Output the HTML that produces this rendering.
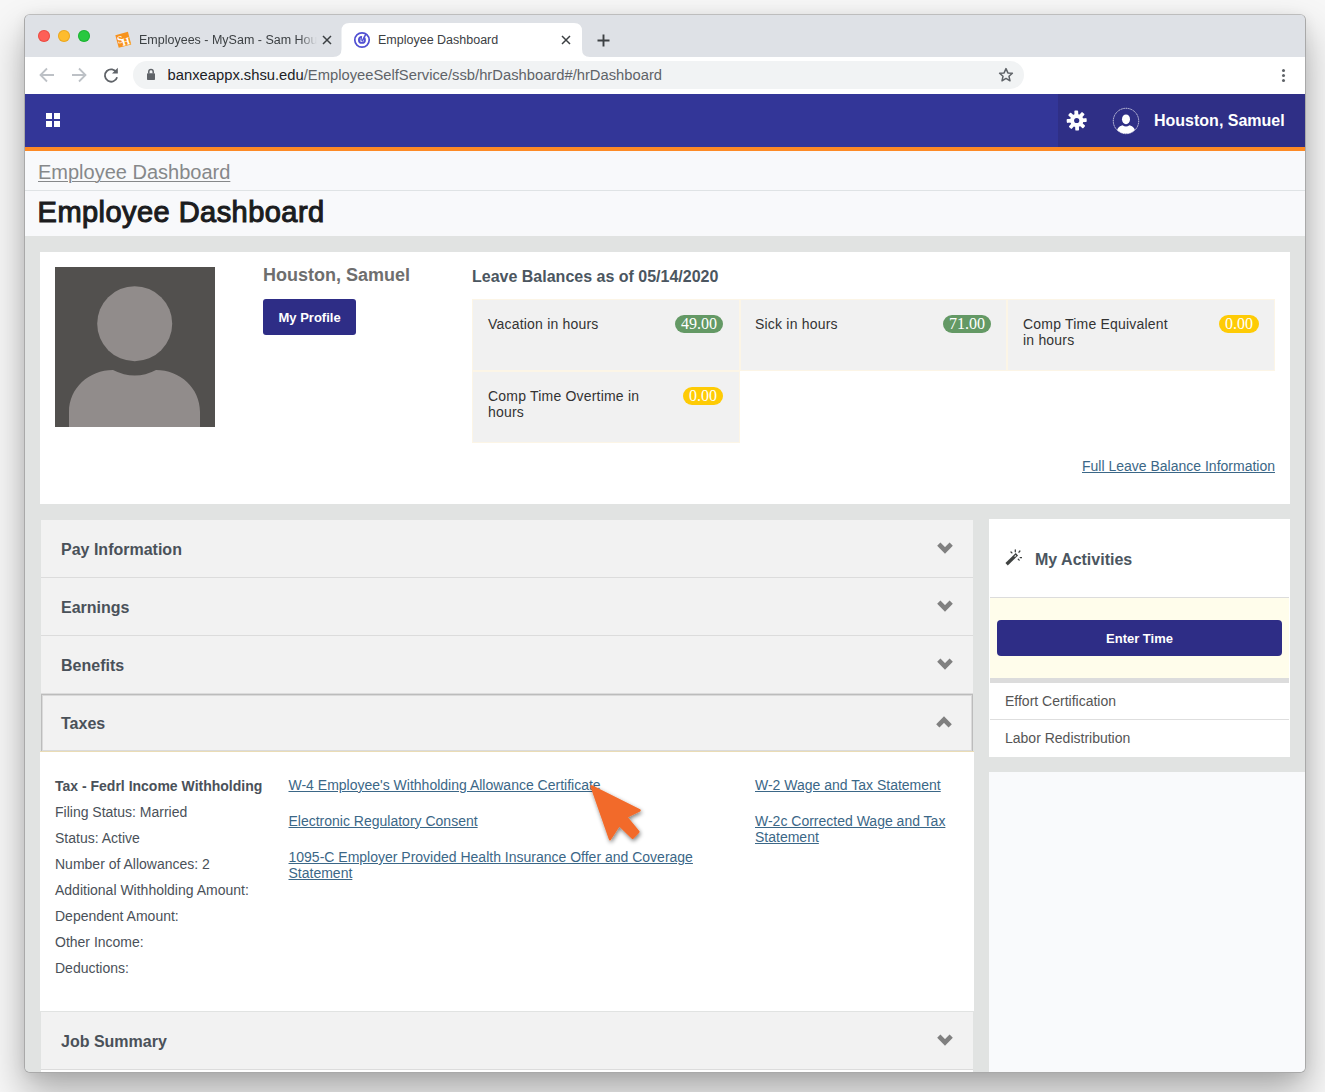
<!DOCTYPE html>
<html><head><meta charset="utf-8">
<style>
*{margin:0;padding:0;box-sizing:border-box}
html,body{width:1325px;height:1092px;overflow:hidden;background:#f7f7f7;font-family:"Liberation Sans",sans-serif}
.a{position:absolute}
.t{position:absolute;white-space:nowrap;line-height:16px}
#win{position:absolute;left:24px;top:14px;width:1282px;height:1059px;border:1px solid #a9a9a9;border-top-color:#bdbdbd;border-radius:6px;overflow:hidden;background:#dee1e6;box-shadow:0 20px 38px rgba(0,0,0,.30),0 2px 14px rgba(0,0,0,.07)}
#c{position:absolute;left:-25px;top:-15px;width:1325px;height:1092px}
.dot{position:absolute;width:12px;height:12px;border-radius:50%}
.hdr{position:absolute;left:41px;width:932px;height:58px;background:#f2f2f2;border-bottom:1px solid #dcdcdc}
.hdr .t{left:20px;font-weight:bold;font-size:16px;color:#4a5159}
.chev{position:absolute;left:896px;width:16px;height:12px}
.k{font-size:14px;color:#4a5159}
.lnk{font-size:14px;color:#3b6787;text-decoration:underline;text-underline-offset:1px}
.tile{position:absolute;height:72px;background:#f1f1f1;border:1px solid #fcf5e6}
.tl{position:absolute;font-size:14px;color:#333;letter-spacing:.2px;line-height:16px;white-space:nowrap}
.badge{position:absolute;height:18px;border-radius:9px;font-family:"Liberation Serif",serif;font-size:16px;line-height:18px;color:#fff;text-align:center}
</style></head>
<body>
<div id="win"><div id="c">
  <!-- ===== tab strip ===== -->
  <div class="a" style="left:0;top:0;width:1325px;height:57px;background:#dee1e6"></div>
  <div class="dot" style="left:38px;top:30px;background:#fe5f57;box-shadow:inset 0 0 0 1px rgba(200,40,30,.35)"></div>
  <div class="dot" style="left:58px;top:30px;background:#febc2e;box-shadow:inset 0 0 0 1px rgba(200,130,0,.35)"></div>
  <div class="dot" style="left:78px;top:30px;background:#28c840;box-shadow:inset 0 0 0 1px rgba(0,140,20,.35)"></div>


  <!-- inactive tab -->
  <svg class="a" style="left:113px;top:30px" width="20" height="20" viewBox="0 0 20 20">
    <g transform="rotate(-15 10.3 9.8)"><rect x="3.8" y="3.3" width="13" height="13" fill="#f7931d"/>
    <text x="4.4" y="12.2" font-family="Liberation Serif" font-size="10.5" font-weight="bold" fill="#fff">S</text>
    <text x="8.3" y="15.6" font-family="Liberation Serif" font-size="10.5" font-weight="bold" fill="#fff">H</text></g>
  </svg>
  <div class="t" style="left:139px;top:32px;font-size:12.5px;color:#3c4043;width:178px;overflow:hidden;-webkit-mask-image:linear-gradient(90deg,#000 160px,transparent 178px)">Employees - MySam - Sam Houston State</div>
  <svg class="a" style="left:321px;top:34px" width="12" height="12" viewBox="0 0 12 12"><path d="M2 2L10 10M10 2L2 10" stroke="#3c4043" stroke-width="1.5" fill="none"/></svg>
  <!-- active tab -->
  <svg class="a" style="left:333px;top:22px" width="258" height="36" viewBox="0 0 258 36">
    <path d="M0 35 Q8.5 35 8.5 27 V9 Q8.5 1 16.5 1 H241 Q249 1 249 9 V27 Q249 35 257 35 V36 H0Z" fill="#fff"/>
  </svg>
  <svg class="a" style="left:352px;top:30px" width="20" height="20" viewBox="0 0 20 20">
    <circle cx="10" cy="10" r="7.2" stroke="#5150d2" stroke-width="1.7" fill="none"/>
    <circle cx="9.95" cy="9.9" r="3.05" stroke="#5150d2" stroke-width="1.8" fill="none"/>
    <path d="M9.7 5.0L14 4.6L12.4 8.0L9.4 10.6Z" fill="#fff"/>
    <path d="M8.9 10.6L9.5 6.2" stroke="#5150d2" stroke-width="1.4" fill="none"/>
    <path d="M10.1 11.3L14.1 3.6" stroke="#5150d2" stroke-width="1.6" fill="none"/>
  </svg>
  <div class="t" style="left:378px;top:32px;font-size:12.5px;color:#3c4043">Employee Dashboard</div>
  <svg class="a" style="left:560px;top:34px" width="12" height="12" viewBox="0 0 12 12"><path d="M2 2L10 10M10 2L2 10" stroke="#3c4043" stroke-width="1.5" fill="none"/></svg>
  <svg class="a" style="left:596px;top:33px" width="15" height="15" viewBox="0 0 15 15"><path d="M7.5 1.5V13.5M1.5 7.5H13.5" stroke="#3c4043" stroke-width="1.9" fill="none"/></svg>
  <!-- ===== toolbar ===== -->
  <div class="a" style="left:0;top:57px;width:1325px;height:37px;background:#fff"></div>
  <div class="a" style="left:133px;top:61px;width:891px;height:28px;border-radius:14px;background:#f1f3f4"></div>

  <svg class="a" style="left:38px;top:66px" width="18" height="18" viewBox="0 0 18 18"><path d="M16 9H3M9 2.5L2.5 9L9 15.5" stroke="#bdc1c6" stroke-width="1.8" fill="none"/></svg>
  <svg class="a" style="left:70px;top:66px" width="18" height="18" viewBox="0 0 18 18"><path d="M2 9H15M9 2.5L15.5 9L9 15.5" stroke="#bdc1c6" stroke-width="1.8" fill="none"/></svg>
  <svg class="a" style="left:102px;top:66px" width="18" height="18" viewBox="0 0 18 18"><path d="M14.6 6.6A6.2 6.2 0 1 0 15.1 11.2" stroke="#5f6368" stroke-width="1.8" fill="none"/><path d="M10 7.6H15.8V1.8Z" fill="#5f6368"/></svg>
  <svg class="a" style="left:145px;top:67px" width="12" height="15" viewBox="0 0 12 15"><path d="M3.8 6.5V4.6A2.2 2.2 0 0 1 8.2 4.6V6.5" stroke="#5f6368" stroke-width="1.5" fill="none"/><rect x="2" y="6.2" width="8" height="6.8" rx=".8" fill="#5f6368"/></svg>
  <div class="t" style="left:167.6px;top:66px;font-size:14.75px;line-height:18px;color:#202124">banxeappx.shsu.edu<span style="color:#5f6368">/EmployeeSelfService/ssb/hrDashboard#/hrDashboard</span></div>
  <svg class="a" style="left:997px;top:66px" width="18" height="18" viewBox="0 0 18 18"><path d="M9 2.6L10.9 6.9L15.4 7.3L12 10.3L13 14.8L9 12.4L5 14.8L6 10.3L2.6 7.3L7.1 6.9Z" stroke="#5f6368" stroke-width="1.5" fill="none" stroke-linejoin="round"/></svg>
  <div class="a" style="left:1282px;top:68.9px;width:3px;height:3px;border-radius:50%;background:#5f6368"></div>
  <div class="a" style="left:1282px;top:74px;width:3px;height:3px;border-radius:50%;background:#5f6368"></div>
  <div class="a" style="left:1282px;top:79px;width:3px;height:3px;border-radius:50%;background:#5f6368"></div>

  <!-- ===== app header ===== -->
  <div class="a" style="left:0;top:94px;width:1325px;height:53px;background:#333698"></div>
  <div class="a" style="left:1058px;top:94px;width:267px;height:53px;background:#2f2f86"></div>
  <div class="a" style="left:0;top:147px;width:1325px;height:4px;background:#fd8a25"></div>


  <!-- grid icon -->
  <div class="a" style="left:46px;top:113px;width:6px;height:6px;background:#fff"></div>
  <div class="a" style="left:54px;top:113px;width:6px;height:6px;background:#fff"></div>
  <div class="a" style="left:46px;top:121px;width:6px;height:6px;background:#fff"></div>
  <div class="a" style="left:54px;top:121px;width:6px;height:6px;background:#fff"></div>
  <!-- gear -->
  <svg class="a" style="left:1066px;top:110px" width="22" height="22" viewBox="0 0 22 22">
    <g fill="#fff" transform="translate(10.7 10.5) rotate(-3)">
      <rect x="-1.9" y="-10" width="3.8" height="20" rx=".9"/>
      <rect x="-1.9" y="-10" width="3.8" height="20" rx=".9" transform="rotate(45)"/>
      <rect x="-1.9" y="-10" width="3.8" height="20" rx=".9" transform="rotate(90)"/>
      <rect x="-1.9" y="-10" width="3.8" height="20" rx=".9" transform="rotate(135)"/>
      <circle r="6.6"/>
    </g>
    <circle cx="10.7" cy="10.5" r="2.6" fill="#2f3087"/>
  </svg>
  <!-- user -->
  <svg class="a" style="left:1112px;top:107px" width="28" height="28" viewBox="0 0 28 28">
    <defs><clipPath id="uc"><circle cx="14" cy="14" r="12.6"/></clipPath></defs>
    <circle cx="14" cy="14" r="12.7" stroke="#fff" stroke-width=".8" fill="none" stroke-dasharray="1.2 .6"/>
    <g clip-path="url(#uc)" fill="#fff">
      <ellipse cx="14" cy="12.3" rx="4" ry="4.9"/>
      <path d="M4 28 Q4.5 19.5 10.5 18.2 Q14 20.6 17.5 18.2 Q23.5 19.5 24 28Z"/>
    </g>
  </svg>
  <div class="t" style="left:1154px;top:111.8px;font-size:16px;line-height:18px;font-weight:bold;color:#fff">Houston, Samuel</div>
  <!-- ===== breadcrumb / title ===== -->
  <div class="a" style="left:0;top:151px;width:1325px;height:85px;background:#f8f9fb"></div>
  <div class="a" style="left:0;top:190px;width:1325px;height:1px;background:#dfe3e5"></div>

  <!-- ===== gray content bg ===== -->
  <div class="a" style="left:0;top:236px;width:1325px;height:856px;background:#e1e3e2"></div>

  <!-- breadcrumb + title -->
  <div class="t" style="left:38px;top:161px;font-size:20px;line-height:22px;color:#86888a;text-decoration:underline;text-decoration-thickness:1px;text-underline-offset:2px">Employee Dashboard</div>
  <div class="t" style="left:37.6px;top:196.15px;font-size:29px;letter-spacing:0.45px;line-height:32px;-webkit-text-stroke:1.1px #1b1c1e;color:#1b1c1e">Employee Dashboard</div>

  <!-- profile card -->
  <div class="a" style="left:40px;top:252px;width:1250px;height:252px;background:#fff"></div>
  <svg class="a" style="left:55px;top:267px" width="160" height="160" viewBox="0 0 160 160">
    <rect width="160" height="160" fill="#52504e"/>
    <circle cx="79.7" cy="56.7" r="37.5" fill="#918c8b"/>
    <path d="M14 160V145C14 121 34 103 58 103Q80 114 101 103C125 103 145 121 145 145V160Z" fill="#918c8b"/>
  </svg>
  <div class="t" style="left:263px;top:264.7px;font-size:18px;line-height:20px;font-weight:bold;color:#6e6e6e">Houston, Samuel</div>
  <div class="a" style="left:263px;top:299px;width:93px;height:36px;border-radius:3px;background:#2e2d86"></div>
  <div class="t" style="left:278.5px;top:309.7px;font-size:13px;line-height:16px;font-weight:bold;color:#fff">My Profile</div>

  <div class="t" style="left:472px;top:268px;font-size:16px;line-height:18px;font-weight:bold;color:#4b5660">Leave Balances as of 05/14/2020</div>
  <div class="tile" style="left:472px;top:299px;width:267.67px"></div>
  <div class="tile" style="left:739.67px;top:299px;width:267.67px"></div>
  <div class="tile" style="left:1007.33px;top:299px;width:267.67px"></div>
  <div class="tile" style="left:472px;top:371px;width:267.67px"></div>
  <div class="tl" style="left:488px;top:315.9px">Vacation in hours</div>
  <div class="badge" style="left:675px;top:315px;width:48px;background:#649965">49.00</div>
  <div class="tl" style="left:755px;top:315.9px">Sick in hours</div>
  <div class="badge" style="left:943px;top:315px;width:48px;background:#649965">71.00</div>
  <div class="tl" style="left:1023px;top:315.9px">Comp Time Equivalent<br>in hours</div>
  <div class="badge" style="left:1219px;top:315px;width:40px;background:#fecb05">0.00</div>
  <div class="tl" style="left:488px;top:387.9px">Comp Time Overtime in<br>hours</div>
  <div class="badge" style="left:683px;top:387px;width:40px;background:#fecb05">0.00</div>
  <div class="t lnk" style="left:1082px;top:458px">Full Leave Balance Information</div>

  <!-- left accordion panel -->
  <div class="a" style="left:40px;top:519px;width:934px;height:560px;background:#e1e3e2"></div>
  <div class="hdr" style="top:520px"><div class="t" style="top:21.3px;line-height:18px">Pay Information</div></div>
  <div class="hdr" style="top:578px"><div class="t" style="top:21.3px;line-height:18px">Earnings</div></div>
  <div class="hdr" style="top:636px"><div class="t" style="top:21.3px;line-height:18px">Benefits</div></div>
  <div class="hdr" style="top:694px;height:58px;border:1px solid #bcbcbc;box-shadow:inset 0 0 0 1px #dadada;border-bottom:1px solid #c8c8c8"><div class="t" style="top:20.2px;line-height:18px;left:19px">Taxes</div></div>
  <div class="a" style="left:40px;top:751px;width:934px;height:1px;background:#eadcb5"></div>
  <div class="a" style="left:40px;top:752px;width:934px;height:259px;background:#fff"></div>
  <div class="hdr" style="top:1012px;height:58px"><div class="t" style="top:21.3px;line-height:18px">Job Summary</div></div>
  <div class="a" style="left:41px;top:1070px;width:932px;height:2px;background:#fff"></div>
  <svg class="a" style="left:937px;top:541.7px" width="16" height="12" viewBox="0 0 16 12"><path d="M1.8 2.2L8 8.4L14.2 2.2" stroke="#808080" stroke-width="4.6" fill="none"/></svg>
  <svg class="a" style="left:937px;top:599.7px" width="16" height="12" viewBox="0 0 16 12"><path d="M1.8 2.2L8 8.4L14.2 2.2" stroke="#808080" stroke-width="4.6" fill="none"/></svg>
  <svg class="a" style="left:937px;top:657.7px" width="16" height="12" viewBox="0 0 16 12"><path d="M1.8 2.2L8 8.4L14.2 2.2" stroke="#808080" stroke-width="4.6" fill="none"/></svg>
  <svg class="a" style="left:937px;top:1033.8px" width="16" height="12" viewBox="0 0 16 12"><path d="M1.8 2.2L8 8.4L14.2 2.2" stroke="#808080" stroke-width="4.6" fill="none"/></svg>
  <svg class="a" style="left:936px;top:716.2px" width="16" height="12" viewBox="0 0 16 12"><path d="M1.8 9.8L8 3.6L14.2 9.8" stroke="#808080" stroke-width="4.6" fill="none"/></svg>

  <!-- taxes content -->
  <div class="t k" style="left:55px;top:778.3px;font-weight:bold">Tax - Fedrl Income Withholding</div>
  <div class="t k" style="left:55px;top:804.1px">Filing Status: Married</div>
  <div class="t k" style="left:55px;top:830.1px">Status: Active</div>
  <div class="t k" style="left:55px;top:856.1px">Number of Allowances: 2</div>
  <div class="t k" style="left:55px;top:882.1px">Additional Withholding Amount:</div>
  <div class="t k" style="left:55px;top:908.1px">Dependent Amount:</div>
  <div class="t k" style="left:55px;top:934.1px">Other Income:</div>
  <div class="t k" style="left:55px;top:960.1px">Deductions:</div>
  <div class="t lnk" style="left:288.5px;top:776.8px">W-4 Employee's Withholding Allowance Certificate</div>
  <div class="t lnk" style="left:288.5px;top:812.8px">Electronic Regulatory Consent</div>
  <div class="t lnk" style="left:288.5px;top:848.8px">1095-C Employer Provided Health Insurance Offer and Coverage<br>Statement</div>
  <div class="t lnk" style="left:755px;top:776.8px">W-2 Wage and Tax Statement</div>
  <div class="t lnk" style="left:755px;top:813px">W-2c Corrected Wage and Tax<br>Statement</div>

  <!-- right column -->
  <div class="a" style="left:989px;top:519px;width:301px;height:238px;background:#fff"></div>
  <svg class="a" style="left:1004px;top:549px" width="18" height="17" viewBox="0 0 18 17">
    <path d="M2.6 15.3L12.9 5.2" stroke="#3f4241" stroke-width="3.3"/>
    <path d="M10.6 7.6L11.9 6.3" stroke="#fff" stroke-width="1.1"/>
    <path d="M11.3 1V2.8M7 3L7.9 3.9M15.9 2L15 3.2M16.2 8.6H17.8M14.3 10.2L15.2 11.1" stroke="#3f4241" stroke-width="1.3" stroke-linecap="round"/>
  </svg>
  <div class="t" style="left:1035px;top:551.4px;font-size:16px;line-height:18px;font-weight:bold;color:#4b5660">My Activities</div>
  <div class="a" style="left:990px;top:597px;width:299px;height:1px;background:#dcdcdc"></div>
  <div class="a" style="left:990px;top:598px;width:299px;height:80px;background:#fffdeb"></div>
  <div class="a" style="left:997px;top:620px;width:285px;height:36px;border-radius:4px;background:#2e2d86"></div>
  <div class="t" style="left:997px;width:285px;text-align:center;top:630.7px;font-size:13px;line-height:16px;font-weight:bold;color:#fff">Enter Time</div>
  <div class="a" style="left:990px;top:678px;width:299px;height:5px;background:#dcdcdc"></div>
  <div class="t" style="left:1005px;top:692.7px;font-size:14px;color:#555">Effort Certification</div>
  <div class="a" style="left:990px;top:719px;width:299px;height:1px;background:#dedede"></div>
  <div class="t" style="left:1005px;top:729.8px;font-size:14px;color:#555">Labor Redistribution</div>
  <div class="a" style="left:989px;top:772px;width:316px;height:300px;background:#f9fafc"></div>

  <!-- cursor -->
  <svg class="a" style="left:580px;top:775px" width="75" height="80" viewBox="580 775 75 80">
    <defs><filter id="sh" x="-30%" y="-30%" width="160%" height="160%"><feGaussianBlur in="SourceAlpha" stdDeviation="2.2"/><feOffset dx="1" dy="2"/><feComponentTransfer><feFuncA type="linear" slope=".5"/></feComponentTransfer><feMerge><feMergeNode/><feMergeNode in="SourceGraphic"/></feMerge></filter></defs>
    <path d="M591.6 786.3L639.6 810.4L626.2 817L638.4 831.8L632.6 837.8L619.2 824.8L610 839.2Z" fill="#f26b2b" stroke="#f26b2b" stroke-width="2.4" stroke-linejoin="round" filter="url(#sh)"/>
  </svg>
</div></div>
</body></html>
